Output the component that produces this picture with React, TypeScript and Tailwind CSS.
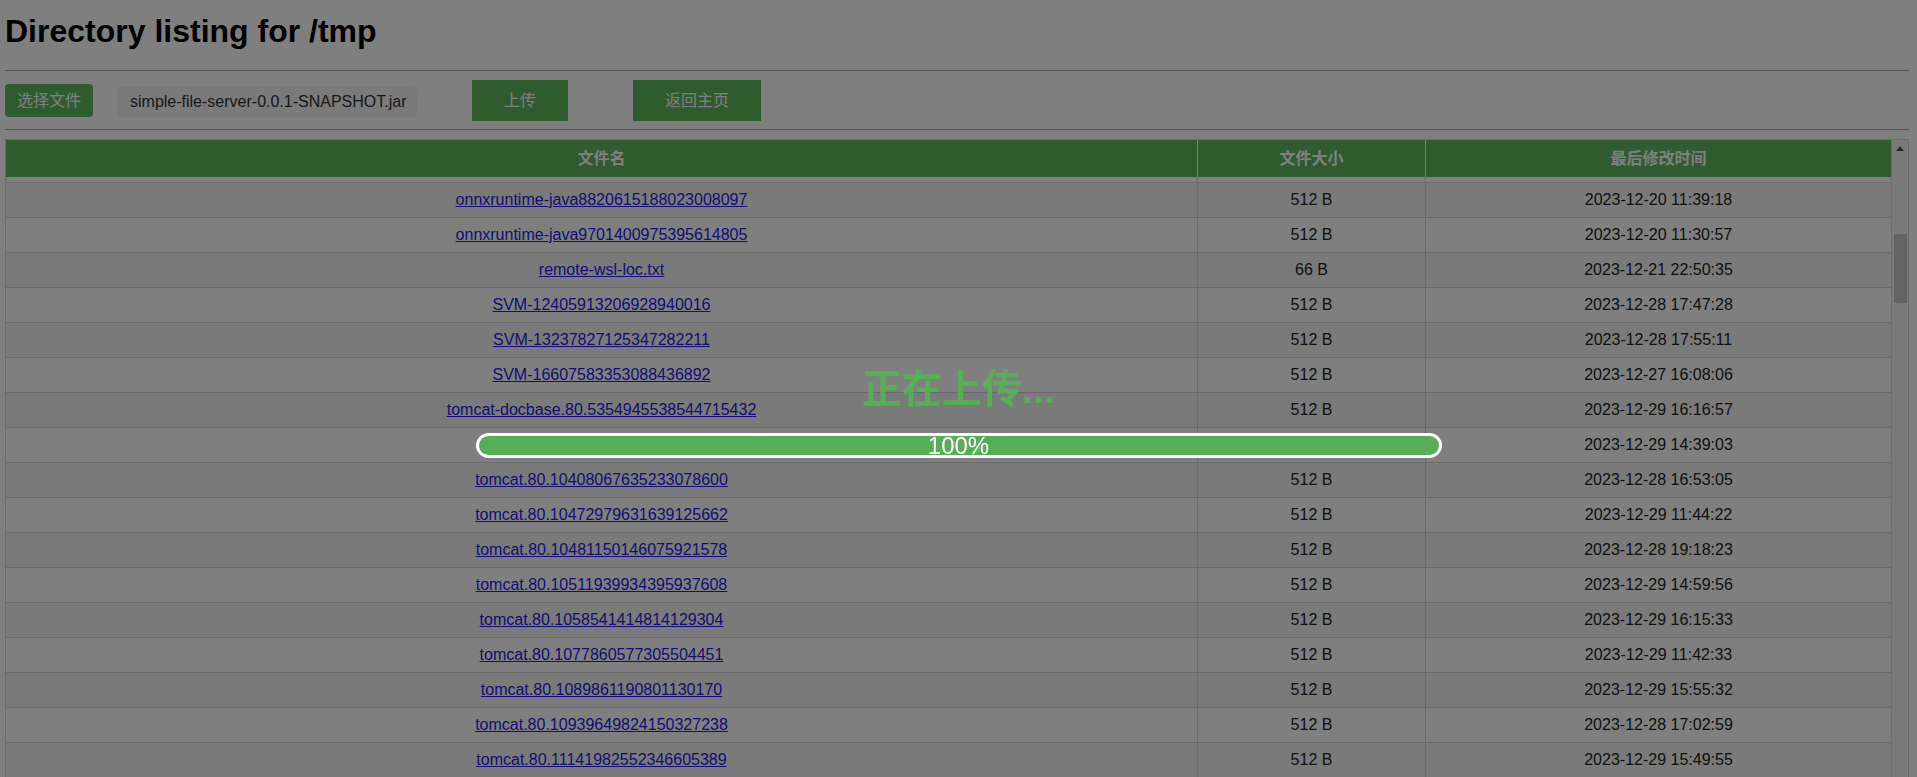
import React from "react";

type Row = { name: string; size: string; date: string };

const rows: Row[] = [
  { name: "onnxruntime-java8820615188023008097", size: "512 B", date: "2023-12-20 11:39:18" },
  { name: "onnxruntime-java9701400975395614805", size: "512 B", date: "2023-12-20 11:30:57" },
  { name: "remote-wsl-loc.txt", size: "66 B", date: "2023-12-21 22:50:35" },
  { name: "SVM-12405913206928940016", size: "512 B", date: "2023-12-28 17:47:28" },
  { name: "SVM-13237827125347282211", size: "512 B", date: "2023-12-28 17:55:11" },
  { name: "SVM-16607583353088436892", size: "512 B", date: "2023-12-27 16:08:06" },
  { name: "tomcat-docbase.80.5354945538544715432", size: "512 B", date: "2023-12-29 16:16:57" },
  { name: "", size: "", date: "2023-12-29 14:39:03" },
  { name: "tomcat.80.10408067635233078600", size: "512 B", date: "2023-12-28 16:53:05" },
  { name: "tomcat.80.10472979631639125662", size: "512 B", date: "2023-12-29 11:44:22" },
  { name: "tomcat.80.10481150146075921578", size: "512 B", date: "2023-12-28 19:18:23" },
  { name: "tomcat.80.10511939934395937608", size: "512 B", date: "2023-12-29 14:59:56" },
  { name: "tomcat.80.1058541414814129304", size: "512 B", date: "2023-12-29 16:15:33" },
  { name: "tomcat.80.1077860577305504451", size: "512 B", date: "2023-12-29 11:42:33" },
  { name: "tomcat.80.1089861190801130170", size: "512 B", date: "2023-12-29 15:55:32" },
  { name: "tomcat.80.10939649824150327238", size: "512 B", date: "2023-12-28 17:02:59" },
  { name: "tomcat.80.11141982552346605389", size: "512 B", date: "2023-12-29 15:49:55" },
];

export default function App() {
  return (
    <div className="h-screen overflow-hidden bg-white pl-[5px] pr-[8px] font-['Liberation_Sans','Noto_Sans_CJK_SC',sans-serif] text-[16px] text-[#222]">
      <h1 className="pt-[13px] text-[32px] font-bold leading-[36px] text-black">
        Directory listing for /tmp
      </h1>
      <div className="mt-[21px] h-px bg-[#a8a8a8]" />
      <div className="mt-[9px] flex h-[41px] items-start">
        <div className="mt-[4px] flex h-[33px] w-[88px] items-center justify-center rounded-[4px] bg-[#5cb85c] text-white">
          选择文件
        </div>
        <div className="ml-[24px] mt-[7px] flex h-[30px] w-[300px] items-center rounded-[4px] bg-[#f4f4f4] pl-[13px] text-[#333]">
          simple-file-server-0.0.1-SNAPSHOT.jar
        </div>
        <button className="ml-[55px] h-[41px] w-[96px] bg-[#5cb85c] text-white">上传</button>
        <button className="ml-[65px] h-[41px] w-[128px] bg-[#5cb85c] text-white">返回主页</button>
      </div>
      <div className="mt-[8px] h-px bg-[#a8a8a8]" />
      <div className="mt-[9px] flex h-[638px] overflow-hidden border border-b-0 border-[#d4d4d4]">
        <div className="w-[1885px]">
          <div className="grid h-[37px] grid-cols-[1191px_228px_466px] bg-[#5cb85c] font-bold text-white">
            <div className="flex items-center justify-center">文件名</div>
            <div className="flex items-center justify-center border-l border-white">文件大小</div>
            <div className="flex items-center justify-center border-l border-white">最后修改时间</div>
          </div>
          <div className="grid h-[5px] grid-cols-[1191px_228px_466px] bg-white">
            <div />
            <div className="border-l border-[#d6d6d6]" />
            <div className="border-l border-[#d6d6d6]" />
          </div>
          {rows.map((r, i) => (
            <div
              key={i}
              className={`grid h-[35px] grid-cols-[1191px_228px_466px] border-t border-[#d6d6d6] ${
                i % 2 === 0 ? "bg-[#f4f4f4]" : "bg-white"
              }`}
            >
              <div className="flex items-center justify-center">
                {r.name && (
                  <a href="#" className="text-[#2a18ee] underline">
                    {r.name}
                  </a>
                )}
              </div>
              <div className="flex items-center justify-center border-l border-[#d6d6d6]">{r.size}</div>
              <div className="flex items-center justify-center border-l border-[#d6d6d6]">{r.date}</div>
            </div>
          ))}
        </div>
        <div className="flex w-[17px] flex-col border-l border-[#dcdcdc] bg-[#f5f5f5]">
          <div className="flex h-[17px] items-center justify-center">
            <svg width="8" height="5" viewBox="0 0 8 5">
              <polygon points="4,0 8,5 0,5" fill="#505050" />
            </svg>
          </div>
          <div className="ml-[2px] mt-[77px] h-[69px] w-[13px] bg-[#c8c8c8]" />
        </div>
      </div>

      <div className="fixed inset-0 flex flex-col items-center bg-black/50 pt-[369px]">
        <div className="h-[40px] text-[40px] font-bold leading-[40px] text-[#55b055]">正在上传...</div>
        <div className="mt-[24px] flex h-[25px] w-[966px] items-center justify-center rounded-full border-[3px] border-white bg-[#58ae56] text-[24px] leading-none text-white">
          100%
        </div>
      </div>
    </div>
  );
}
